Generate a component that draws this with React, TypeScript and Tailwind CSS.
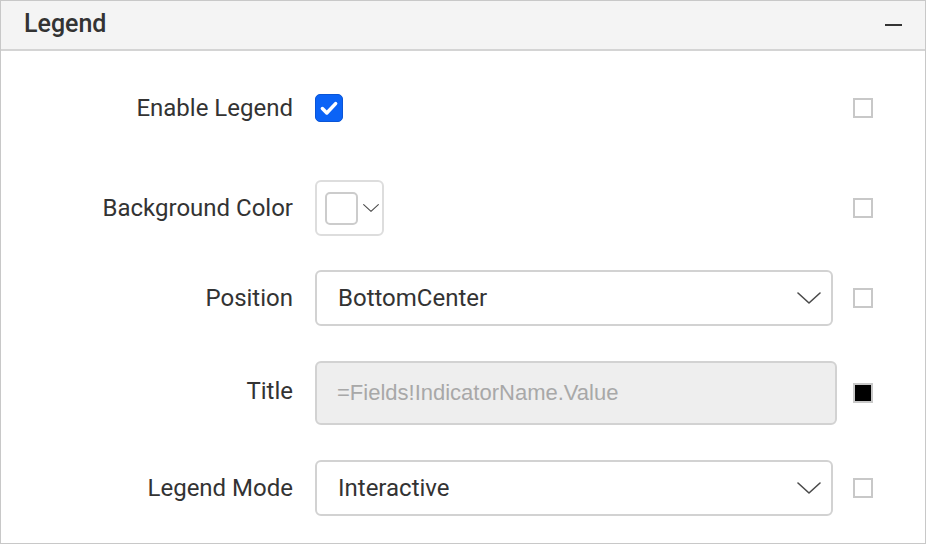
import React from "react";

const labelCls =
  "w-[292px] shrink-0 text-right text-[24px] leading-none text-[#333333] font-['Roboto',sans-serif]";

function Chevron({ className }: { className?: string }) {
  return (
    <svg viewBox="0 0 24 12" className={className} fill="none" aria-hidden="true">
      <path d="M1 1l11 10L23 1" stroke="#4a4a4a" strokeWidth="1.6" strokeLinejoin="round" strokeLinecap="round" />
    </svg>
  );
}

function Flag({ on = false }: { on?: boolean }) {
  return (
    <div className="ml-auto mr-[52px] flex h-5 w-5 items-center justify-center border-2 border-[#c8c8c8] bg-white">
      {on && <div className="h-full w-full bg-black" />}
    </div>
  );
}

function Select({ value }: { value: string }) {
  return (
    <div className="flex h-[56px] w-[518px] items-center justify-between rounded-[6px] border-2 border-[#d2d2d2] bg-white pl-[21px] pr-[10px]">
      <span className="text-[24px] leading-none text-[#333333] font-['Roboto',sans-serif]">{value}</span>
      <Chevron className="h-[12px] w-[24px]" />
    </div>
  );
}

export default function App() {
  return (
    <div className="flex h-[544px] w-[926px] flex-col border border-[#c8c8c8] bg-white">
      {/* header */}
      <div className="flex h-[50px] shrink-0 items-center justify-between border-b-2 border-[#d4d4d4] bg-[#f4f4f4] pl-[23px] pr-[23px]">
        <span className="mb-[4px] text-[25px] font-medium leading-none text-[#333333] font-['Roboto',sans-serif]">Legend</span>
        <div className="h-[2px] w-[17px] bg-[#333333]" />
      </div>

      {/* rows */}
      <div className="flex flex-col pt-[43px]">
        <div className="flex h-[28px] items-center">
          <span className={labelCls}>Enable Legend</span>
          <div className="ml-[22px] flex h-[28px] w-[28px] items-center justify-center rounded-[5px] border border-[#0a55d6] bg-[#0b63f6]">
            <svg viewBox="0 0 20 20" className="h-[22px] w-[22px]" fill="none">
              <path d="M4 10.5l4 4L16 6" stroke="white" strokeWidth="3.2" strokeLinecap="round" strokeLinejoin="round" />
            </svg>
          </div>
          <Flag />
        </div>

        <div className="mt-[58px] flex h-[56px] items-center">
          <span className={labelCls}>Background Color</span>
          <div className="ml-[22px] flex h-[56px] w-[69px] items-center gap-[5px] rounded-[6px] border-2 border-[#dddddd] bg-white pl-[8px]">
            <div className="h-[33px] w-[33px] rounded-[5px] border-2 border-[#cccccc] bg-white" />
            <Chevron className="h-[8px] w-[16px]" />
          </div>
          <Flag />
        </div>

        <div className="mt-[34px] flex h-[56px] items-center">
          <span className={labelCls}>Position</span>
          <div className="ml-[22px]">
            <Select value="BottomCenter" />
          </div>
          <Flag />
        </div>

        <div className="mt-[35px] flex h-[64px] items-center">
          <span className={`${labelCls} mb-[4px]`}>Title</span>
          <div className="ml-[22px] flex h-[64px] w-[522px] items-center rounded-[6px] border-2 border-[#d2d2d2] bg-[#eeeeee] pl-[20px]">
            <span className="text-[22px] leading-none text-[#a8a8a8] font-['Liberation_Sans',Arial,sans-serif]">
              =Fields!IndicatorName.Value
            </span>
          </div>
          <div className="ml-auto mr-[52px] h-5 w-5 border-2 border-[#c8c8c8] bg-black" />
        </div>

        <div className="mt-[35px] flex h-[56px] items-center">
          <span className={labelCls}>Legend Mode</span>
          <div className="ml-[22px]">
            <Select value="Interactive" />
          </div>
          <Flag />
        </div>
      </div>
    </div>
  );
}
